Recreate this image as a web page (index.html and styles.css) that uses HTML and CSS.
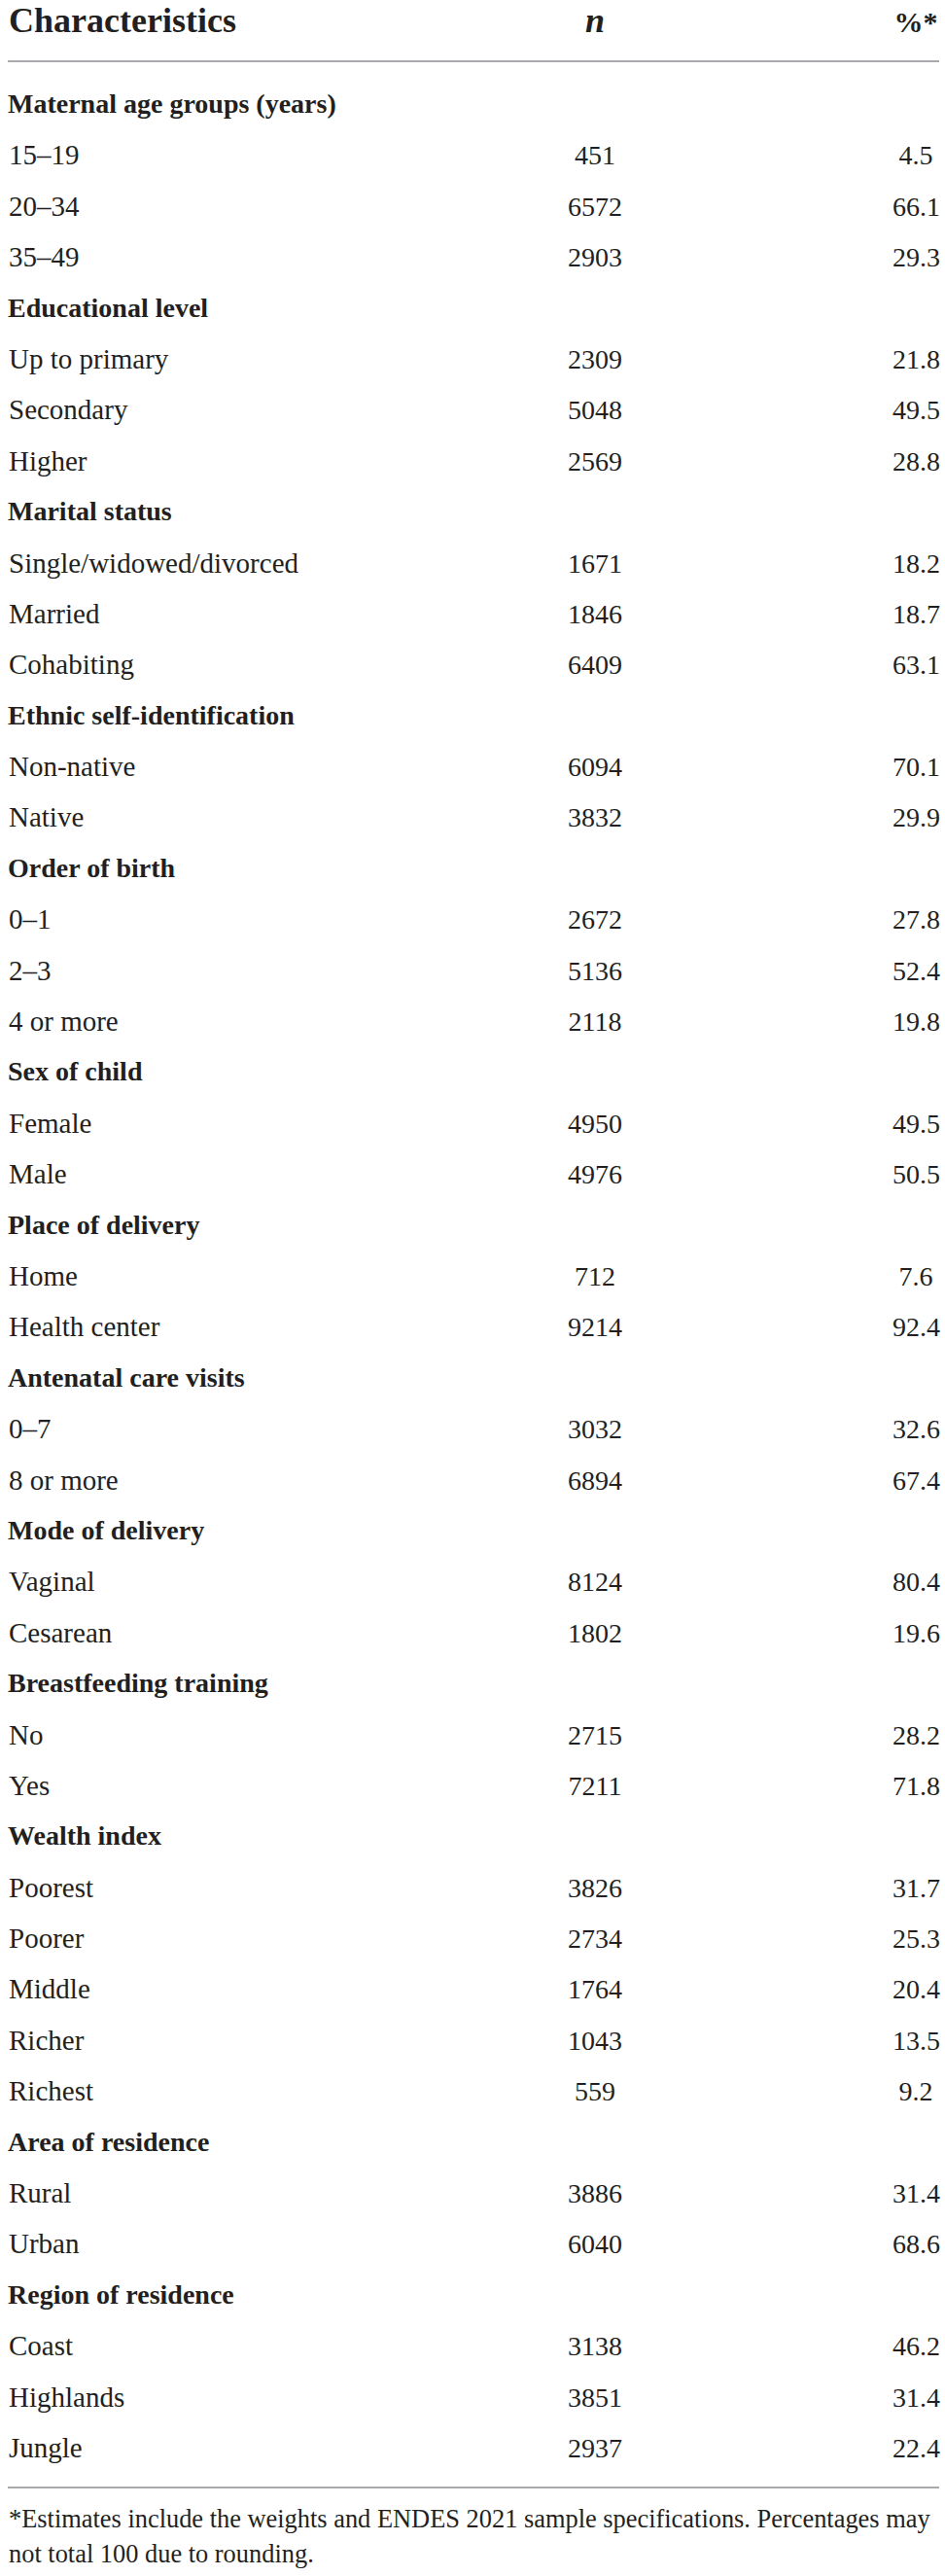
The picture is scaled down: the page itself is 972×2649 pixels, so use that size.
FILE: index.html
```html
<!DOCTYPE html>
<html lang="en">
<head>
    <meta charset="UTF-8">
    <meta name="viewport" content="width=device-width, initial-scale=1.0">
    <title>Characteristics of the sample</title>
    <link rel="stylesheet" href="styles.css">
</head>
<body>
    <div class="table">
        <div class="row head">
            <div class="label">Characteristics</div>
            <div class="num"><i>n</i></div>
            <div class="pct">%*</div>
        </div>

        <div class="rows">
            <div class="row group"><div class="label">Maternal age groups (years)</div></div>
            <div class="row"><div class="label">15–19</div><div class="num">451</div><div class="pct">4.5</div></div>
            <div class="row"><div class="label">20–34</div><div class="num">6572</div><div class="pct">66.1</div></div>
            <div class="row"><div class="label">35–49</div><div class="num">2903</div><div class="pct">29.3</div></div>

            <div class="row group"><div class="label">Educational level</div></div>
            <div class="row"><div class="label">Up to primary</div><div class="num">2309</div><div class="pct">21.8</div></div>
            <div class="row"><div class="label">Secondary</div><div class="num">5048</div><div class="pct">49.5</div></div>
            <div class="row"><div class="label">Higher</div><div class="num">2569</div><div class="pct">28.8</div></div>

            <div class="row group"><div class="label">Marital status</div></div>
            <div class="row"><div class="label">Single/widowed/divorced</div><div class="num">1671</div><div class="pct">18.2</div></div>
            <div class="row"><div class="label">Married</div><div class="num">1846</div><div class="pct">18.7</div></div>
            <div class="row"><div class="label">Cohabiting</div><div class="num">6409</div><div class="pct">63.1</div></div>

            <div class="row group"><div class="label">Ethnic self-identification</div></div>
            <div class="row"><div class="label">Non-native</div><div class="num">6094</div><div class="pct">70.1</div></div>
            <div class="row"><div class="label">Native</div><div class="num">3832</div><div class="pct">29.9</div></div>

            <div class="row group"><div class="label">Order of birth</div></div>
            <div class="row"><div class="label">0–1</div><div class="num">2672</div><div class="pct">27.8</div></div>
            <div class="row"><div class="label">2–3</div><div class="num">5136</div><div class="pct">52.4</div></div>
            <div class="row"><div class="label">4 or more</div><div class="num">2118</div><div class="pct">19.8</div></div>

            <div class="row group"><div class="label">Sex of child</div></div>
            <div class="row"><div class="label">Female</div><div class="num">4950</div><div class="pct">49.5</div></div>
            <div class="row"><div class="label">Male</div><div class="num">4976</div><div class="pct">50.5</div></div>

            <div class="row group"><div class="label">Place of delivery</div></div>
            <div class="row"><div class="label">Home</div><div class="num">712</div><div class="pct">7.6</div></div>
            <div class="row"><div class="label">Health center</div><div class="num">9214</div><div class="pct">92.4</div></div>

            <div class="row group"><div class="label">Antenatal care visits</div></div>
            <div class="row"><div class="label">0–7</div><div class="num">3032</div><div class="pct">32.6</div></div>
            <div class="row"><div class="label">8 or more</div><div class="num">6894</div><div class="pct">67.4</div></div>

            <div class="row group"><div class="label">Mode of delivery</div></div>
            <div class="row"><div class="label">Vaginal</div><div class="num">8124</div><div class="pct">80.4</div></div>
            <div class="row"><div class="label">Cesarean</div><div class="num">1802</div><div class="pct">19.6</div></div>

            <div class="row group"><div class="label">Breastfeeding training</div></div>
            <div class="row"><div class="label">No</div><div class="num">2715</div><div class="pct">28.2</div></div>
            <div class="row"><div class="label">Yes</div><div class="num">7211</div><div class="pct">71.8</div></div>

            <div class="row group"><div class="label">Wealth index</div></div>
            <div class="row"><div class="label">Poorest</div><div class="num">3826</div><div class="pct">31.7</div></div>
            <div class="row"><div class="label">Poorer</div><div class="num">2734</div><div class="pct">25.3</div></div>
            <div class="row"><div class="label">Middle</div><div class="num">1764</div><div class="pct">20.4</div></div>
            <div class="row"><div class="label">Richer</div><div class="num">1043</div><div class="pct">13.5</div></div>
            <div class="row"><div class="label">Richest</div><div class="num">559</div><div class="pct">9.2</div></div>

            <div class="row group"><div class="label">Area of residence</div></div>
            <div class="row"><div class="label">Rural</div><div class="num">3886</div><div class="pct">31.4</div></div>
            <div class="row"><div class="label">Urban</div><div class="num">6040</div><div class="pct">68.6</div></div>

            <div class="row group"><div class="label">Region of residence</div></div>
            <div class="row"><div class="label">Coast</div><div class="num">3138</div><div class="pct">46.2</div></div>
            <div class="row"><div class="label">Highlands</div><div class="num">3851</div><div class="pct">31.4</div></div>
            <div class="row"><div class="label">Jungle</div><div class="num">2937</div><div class="pct">22.4</div></div>
        </div>

        <p class="note">*Estimates include the weights and ENDES 2021 sample specifications. Percentages may not total 100 due to rounding.</p>
    </div>
</body>
</html>
```

FILE: styles.css
```css
* {
    margin: 0;
    padding: 0;
    box-sizing: border-box;
}

body {
    background: white;
    color: #231f20;
    font-family: 'Liberation Serif', 'Times New Roman', serif;
}

.table {
    padding: 0 6px 0 8px;
}

.row {
    display: flex;
    align-items: baseline;
    height: 52.4px;
    line-height: 52.4px;
    font-size: 29px;
}

.label {
    width: 554px;
    padding-left: 1px;
    white-space: nowrap;
}

.num {
    width: 100px;
    text-align: center;
    font-size: 28px;
}

.pct {
    width: 48px;
    margin-left: auto;
    text-align: center;
    font-size: 28px;
    white-space: nowrap;
}

/* Cabecera */
.head {
    height: auto;
    line-height: 40px;
    font-size: 36px;
    font-weight: bold;
    padding-top: 1px;
    padding-bottom: 19px;
    border-bottom: 2px solid #a7a9ac;
}

.head .num {
    font-size: 36px;
}

.head .pct {
    font-size: 30px;
}

.rows {
    padding-top: 17px;
    padding-bottom: 14px;
    border-bottom: 2px solid #a7a9ac;
}

.group {
    font-size: 28px;
    font-weight: bold;
}

.group .label {
    padding-left: 0;
}

.note {
    margin-top: 13px;
    padding-left: 1px;
    font-size: 26.4px;
    line-height: 36px;
}
```
